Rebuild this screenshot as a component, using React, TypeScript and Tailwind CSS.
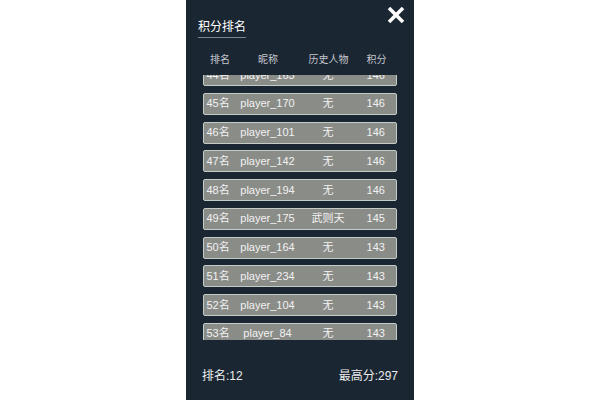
import React from 'react';

interface Row {
    rank: number;
    name: string;
    hero: string;
    score: number;
}

const rows: Row[] = [
    { rank: 44, name: 'player_163', hero: '无', score: 146 },
    { rank: 45, name: 'player_170', hero: '无', score: 146 },
    { rank: 46, name: 'player_101', hero: '无', score: 146 },
    { rank: 47, name: 'player_142', hero: '无', score: 146 },
    { rank: 48, name: 'player_194', hero: '无', score: 146 },
    { rank: 49, name: 'player_175', hero: '武则天', score: 145 },
    { rank: 50, name: 'player_164', hero: '无', score: 143 },
    { rank: 51, name: 'player_234', hero: '无', score: 143 },
    { rank: 52, name: 'player_104', hero: '无', score: 143 },
    { rank: 53, name: 'player_84', hero: '无', score: 143 },
];

const font = { fontFamily: '"Liberation Sans", "Noto Sans CJK SC", sans-serif' };

const CloseIcon = () => (
    <svg width="18" height="18" viewBox="0 0 18 18">
        <line x1="2" y1="2" x2="16" y2="16" stroke="white" strokeWidth="3.6" />
        <line x1="16" y1="2" x2="2" y2="16" stroke="white" strokeWidth="3.6" />
    </svg>
);

export default function App() {
    return (
        <div className="w-[600px] h-[400px] bg-white flex justify-center" style={font}>
            <div className="w-[228px] h-[400px] bg-[#1b2633] flex flex-col">
                {/* title */}
                <div className="h-[48px] flex justify-between items-start">
                    <div className="ml-[12px] mt-[20px] text-[12px] leading-[14px] text-white pb-[3px] border-b border-[#7d848c]">
                        积分排名
                    </div>
                    <button className="mt-[6px] mr-[9px]">
                        <CloseIcon />
                    </button>
                </div>

                {/* column headers */}
                <div className="mt-[5px] h-[14px] mx-[17px] grid grid-cols-[32px_66px_55px_1fr] items-center text-[10px] leading-[12px] text-[#c3c7cc]">
                    <span className="text-center pl-[2px]">排名</span>
                    <span className="text-center">昵称</span>
                    <span className="text-center">历史人物</span>
                    <span className="text-center">积分</span>
                </div>

                {/* list, scrolled part way */}
                <div className="mt-[8px] h-[265px] overflow-hidden">
                    <div className="-mt-[11px] flex flex-col gap-[6.75px] mx-[17px]">
                        {rows.map((r) => (
                            <div
                                key={r.rank}
                                className="h-[22px] shrink-0 rounded-[2px] border-[1.5px] border-[#c4ccc7] bg-[#8a8c88] grid grid-cols-[30.5px_66px_55px_1fr] items-center text-[11px] leading-[13px] text-[#f2f2f2]"
                            >
                                <span className="pl-[2.5px]">{r.rank}名</span>
                                <span className="text-center">{r.name}</span>
                                <span className="text-center">{r.hero}</span>
                                <span className="text-center">{r.score}</span>
                            </div>
                        ))}
                    </div>
                </div>

                {/* footer */}
                <div className="flex-1 flex items-end justify-between px-[16px] pb-[16px] text-[12px] leading-[16px] text-[#ececec]">
                    <span>排名:12</span>
                    <span>最高分:297</span>
                </div>
            </div>
        </div>
    );
}
